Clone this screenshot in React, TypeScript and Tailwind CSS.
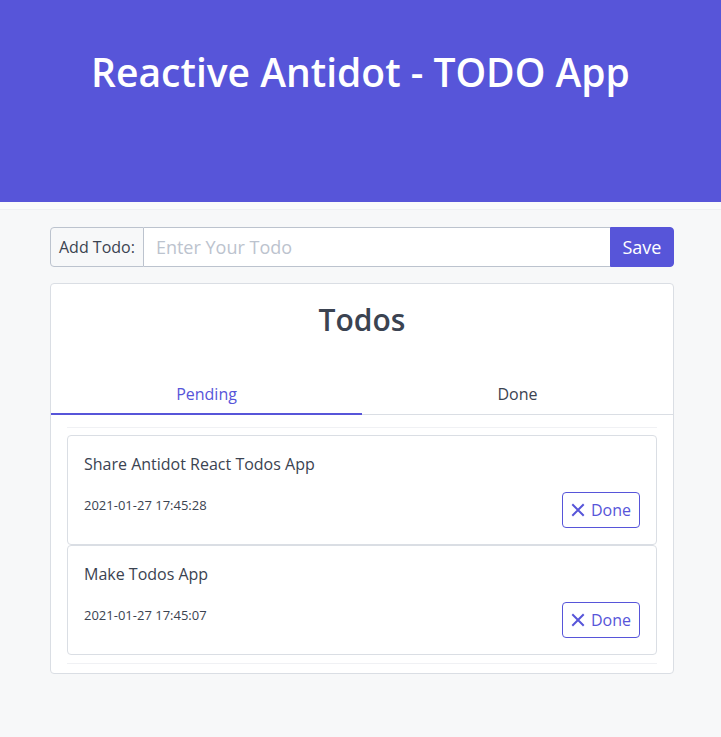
import React, { useState } from "react";

type Todo = { id: number; title: string; date: string };

const todos: Todo[] = [
  { id: 1, title: "Share Antidot React Todos App", date: "2021-01-27 17:45:28" },
  { id: 2, title: "Make Todos App", date: "2021-01-27 17:45:07" },
];

function XIcon() {
  return (
    <svg width="14" height="14" viewBox="0 0 14 14" fill="none" stroke="currentColor" strokeWidth="2" strokeLinecap="square">
      <path d="M2 2 L12 12 M12 2 L2 12" />
    </svg>
  );
}

export default function App() {
  const [tab, setTab] = useState("pending");
  const [text, setText] = useState("");

  return (
    <div className="min-h-screen bg-[#f7f8f9] text-[#3b4351]" style={{ fontFamily: '"Open Sans", "Noto Sans", sans-serif' }}>
      <header className="bg-[#5755d9] h-[202px] pt-[44px] text-center">
        <h1 className="text-white text-[39px] leading-[56px] font-semibold">Reactive Antidot - TODO App</h1>
      </header>
      <div className="h-2 bg-[#f9fafb] border-b border-[#eef0f3]" />

      <main className="w-[624px] ml-[50px] pt-[17px]">
        <div className="flex h-10 text-[18px]">
          <span className="flex items-center px-2 bg-[#f7f8f9] border border-[#bcc3ce] rounded-l-sm text-[16px] text-[#3b4351]">Add Todo:</span>
          <input
            className="flex-1 min-w-0 bg-white border-y border-[#bcc3ce] px-3 outline-none placeholder:text-[#bcc3ce]"
            placeholder="Enter Your Todo"
            value={text}
            onChange={e => setText(e.target.value)}
          />
          <button className="w-16 bg-[#5755d9] border border-[#5755d9] text-white rounded-r-sm">Save</button>
        </div>

        <div className="mt-4 bg-white border border-[#dadee4] rounded-sm">
          <h2 className="text-center text-[30px] leading-[40px] font-semibold pt-4 pb-[38px]">Todos</h2>
          <div className="flex border-b border-[#dadee4]">
            <button
              onClick={() => setTab("pending")}
              className={"flex-1 h-[37px] pb-[3px] -mb-px text-[16px] border-b-2 " + (tab === "pending" ? "text-[#5755d9] border-[#5755d9]" : "border-transparent")}
            >
              Pending
            </button>
            <button
              onClick={() => setTab("done")}
              className={"flex-1 h-[37px] pb-[3px] -mb-px text-[16px] border-b-2 " + (tab === "done" ? "text-[#5755d9] border-[#5755d9]" : "border-transparent")}
            >
              Done
            </button>
          </div>

          <div className="px-4 pt-3 pb-[9px]">
            <div className="border-t border-[#f0f1f4] pt-[7px]">
              {todos.map(t => (
                <div key={t.id} className="h-[110px] border border-[#dadee4] rounded-sm px-4 pt-[16px] flex justify-between">
                  <div>
                    <div className="text-[16px] leading-6">{t.title}</div>
                    <div className="text-[13px] leading-5 mt-[19px]">{t.date}</div>
                  </div>
                  <button className="self-start mt-[40px] h-9 px-2 flex items-center gap-1.5 border border-[#5755d9] rounded-sm text-[#5755d9] text-[16px]">
                    <XIcon />
                    Done
                  </button>
                </div>
              ))}
            </div>
            <div className="border-t border-[#f0f1f4] mt-2" />
          </div>
        </div>
      </main>
    </div>
  );
}
